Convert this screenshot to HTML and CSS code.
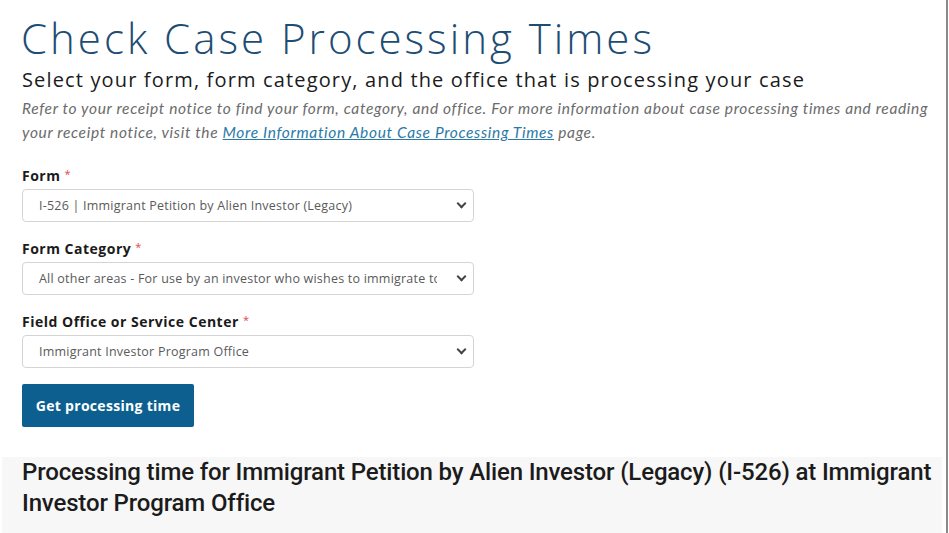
FILE: index.html
```html
<!DOCTYPE html>
<html lang="en">
<head>
  <meta charset="UTF-8" />
  <meta name="viewport" content="width=device-width, initial-scale=1.0"/>
  <title>Check Case Processing Times</title>
  <link rel="stylesheet" href="styles.css">
</head>
<body>
  <div class="page">

    <h1>Check Case Processing Times</h1>
    <h2>Select your form, form category, and the office that is processing your case</h2>
    <p class="intro">Refer to your receipt notice to find your form, category, and office. For more information about case processing times and reading your receipt notice, visit the <a href="#">More Information About Case Processing Times</a> page.</p>

    <!-- Search form -->
    <form class="search-form">
      <div class="field">
        <label for="form">Form <span class="req">*</span></label>
        <div class="select-wrap">
          <select id="form">
            <option>I-526 | Immigrant Petition by Alien Investor (Legacy)</option>
          </select>
        </div>
      </div>

      <div class="field">
        <label for="category">Form Category <span class="req">*</span></label>
        <div class="select-wrap">
          <select id="category">
            <option>All other areas - For use by an investor who wishes to immigrate to the United States</option>
          </select>
        </div>
      </div>

      <div class="field">
        <label for="office">Field Office or Service Center <span class="req">*</span></label>
        <div class="select-wrap">
          <select id="office">
            <option>Immigrant Investor Program Office</option>
          </select>
        </div>
      </div>

      <button type="button" class="btn">Get processing time</button>
    </form>

    <!-- Result -->
    <section class="result">
      <h3>Processing time for Immigrant Petition by Alien Investor (Legacy) (I-526) at Immigrant Investor Program Office</h3>
    </section>

  </div>
</body>
</html>
```

FILE: styles.css
```css
html, body {
  height: 100%;
}

body {
  margin: 0;
  background: #fff;
  font-family: "Open Sans", Lato, sans-serif;
  color: #1b1b1b;
  overflow: hidden;
}

.page {
  height: 100%;
  box-sizing: border-box;
  border-right: 2px solid #8a8a8a;
  margin-right: 1px;
  display: flex;
  flex-direction: column;
}

h1 {
  margin: 13px 0 0 21px;
  font-size: 42px;
  font-weight: 300;
  line-height: 50px;
  color: #1d4d74;
  letter-spacing: 3px;
}

h2 {
  margin: 4px 0 0 22px;
  font-size: 20px;
  font-weight: 400;
  line-height: 26px;
  letter-spacing: 1.15px;
  color: #1b1b1b;
}

.intro {
  margin: 3px 0 0 22px;
  font-family: Lato, sans-serif;
  font-size: 15.5px;
  font-style: italic;
  line-height: 24px;
  letter-spacing: 0.65px;
  color: #6b6b6b;
}

.intro a {
  color: #2a7aa8;
}

.search-form {
  margin: 22px 0 0 22px;
  width: 452px;
  display: flex;
  flex-direction: column;
}

.field {
  display: flex;
  flex-direction: column;
  margin-bottom: 17px;
}

.field label {
  font-size: 14px;
  font-weight: 700;
  line-height: 20px;
  letter-spacing: 0.5px;
  margin-bottom: 3px;
  color: #1b1b1b;
}

.req {
  color: #e0484a;
  font-size: 11px;
  font-weight: 400;
  vertical-align: top;
  line-height: 16px;
}

.select-wrap {
  position: relative;
}

.select-wrap::after {
  content: "";
  position: absolute;
  right: 9px;
  top: 11px;
  width: 5px;
  height: 5px;
  border-right: 2px solid #444;
  border-bottom: 2px solid #444;
  transform: rotate(45deg);
  pointer-events: none;
}

select {
  appearance: none;
  -webkit-appearance: none;
  width: 100%;
  height: 33px;
  padding: 0 36px 0 16px;
  border: 1px solid #d4d4d4;
  border-radius: 4px;
  background: #fff;
  font-family: "Open Sans", sans-serif;
  font-size: 12.5px;
  letter-spacing: 0.22px;
  color: #5a5a5a;
}

.btn {
  align-self: flex-start;
  margin-top: -1px;
  width: 172px;
  height: 43px;
  border: 0;
  border-radius: 2px;
  background: #0c5f8f;
  color: #fff;
  font-family: "Open Sans", sans-serif;
  font-size: 14px;
  font-weight: 700;
  letter-spacing: 0.3px;
}

.result {
  margin: 30px 4px 0 2px;
  padding: 0 10px 0 20px;
  background: #f7f7f7;
  flex: 1;
}

.result h3 {
  margin: 0;
  font-family: Roboto, sans-serif;
  font-size: 24px;
  font-weight: 500;
  line-height: 31px;
  letter-spacing: -0.15px;
  color: #1b1b1b;
}
```
